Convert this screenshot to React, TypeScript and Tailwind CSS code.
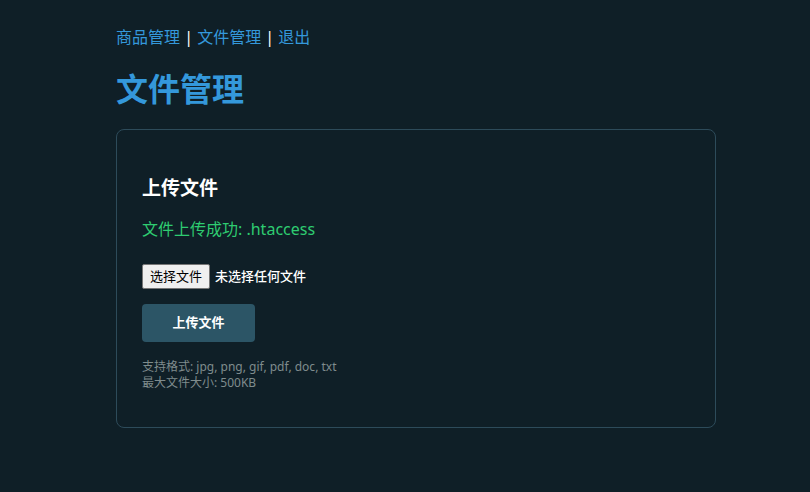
export default function App() {
  const font = { fontFamily: '"Noto Sans", "Noto Sans CJK SC", sans-serif' };
  return (
    <div className="min-h-[492px] w-full bg-[#0f1f27]" style={font}>
      <div className="ml-[116px] w-[600px] pt-[24px]">
        <nav className="text-[16px] leading-[26px] text-white">
          <a className="text-[#3498db]">商品管理</a> | <a className="text-[#3498db]">文件管理</a> | <a className="text-[#3498db]">退出</a>
        </nav>
        <h1 className="mt-[17px] text-[32px] font-bold leading-[44px] text-[#3498db]">文件管理</h1>
        <div className="mt-[18px] h-[299px] rounded-[8px] border border-[#2d4b5a] px-[25px] pt-[44px]">
          <h3 className="text-[19px] font-bold leading-[28px] text-white">上传文件</h3>
          <p className="mt-[15px] text-[16px] leading-[24px] text-[#2ecc71]">文件上传成功: .htaccess</p>
          <div className="mt-[23px] flex items-center gap-[5px]">
            <span className="flex h-[25px] w-[68px] items-center justify-center rounded-[2px] border border-[#767676] bg-[#efefef] text-[13px] text-black">选择文件</span>
            <span className="text-[13px] font-medium text-white">未选择任何文件</span>
          </div>
          <button className="mt-[15px] flex h-[38px] w-[113px] items-center justify-center rounded-[4px] bg-[#2c5566] text-[13px] font-bold text-white">上传文件</button>
          <div className="mt-[17px] text-[12px] leading-[16px] text-[#7f8c8d]">
            <div>支持格式: jpg, png, gif, pdf, doc, txt</div>
            <div>最大文件大小: 500KB</div>
          </div>
        </div>
      </div>
    </div>
  );
}
